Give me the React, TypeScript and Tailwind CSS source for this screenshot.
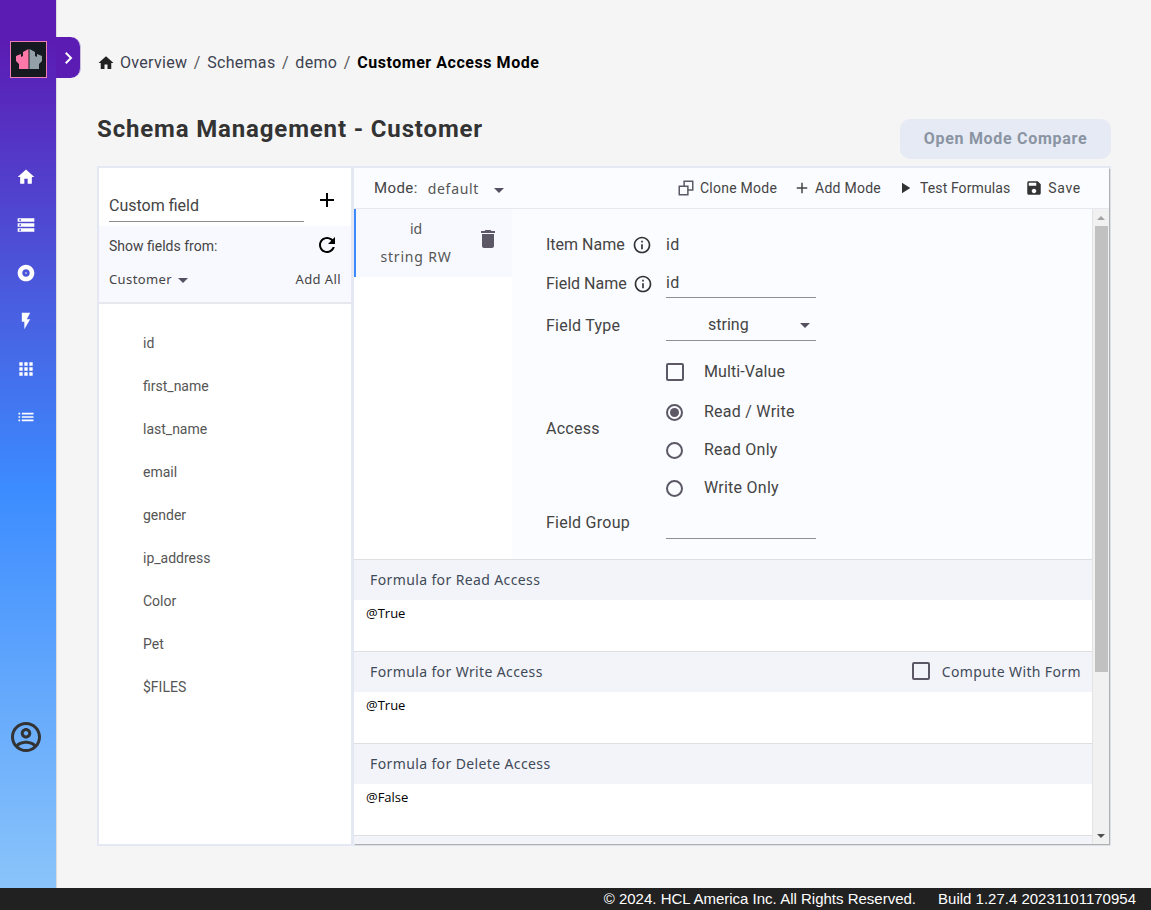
import type { ReactNode } from 'react';

const icons = {
    home: 'M10 20v-6h4v6h5v-8h3L12 3 2 12h3v8z',
    storage: 'M2 20h20v-4H2v4zm2-3h2v2H4v-2zM2 4v4h20V4H2zm4 3H4V5h2v2zm-4 7h20v-4H2v4zm2-3h2v2H4v-2z',
    album: 'M12 2C6.48 2 2 6.48 2 12s4.48 10 10 10 10-4.48 10-10S17.52 2 12 2zm0 14.5c-2.49 0-4.5-2.01-4.5-4.5S9.51 7.5 12 7.5s4.5 2.01 4.5 4.5-2.01 4.5-4.5 4.5zm0-5.5c-.55 0-1 .45-1 1s.45 1 1 1 1-.45 1-1-.45-1-1-1z',
    flash: 'M7 2v11h3v9l7-12h-4l4-8z',
    apps: 'M4 8h4V4H4v4zm6 12h4v-4h-4v4zm-6 0h4v-4H4v4zm0-6h4v-4H4v4zm6 0h4v-4h-4v4zm6-10v4h4V4h-4zm-6 4h4V4h-4v4zm6 6h4v-4h-4v4zm0 6h4v-4h-4v4z',
    list: 'M3 13h2v-2H3v2zm0 4h2v-2H3v2zm0-8h2V7H3v2zm4 4h14v-2H7v2zm0 4h14v-2H7v2zM7 7v2h14V7H7z',
    refresh: 'M17.65 6.35C16.2 4.9 14.21 4 12 4c-4.42 0-7.99 3.58-7.99 8s3.57 8 7.99 8c3.73 0 6.84-2.55 7.73-6h-2.08c-.82 2.33-3.04 4-5.65 4-3.31 0-6-2.69-6-6s2.69-6 6-6c1.66 0 3.14.69 4.22 1.78L13 11h7V4l-2.35 2.35z',
    trash: 'M6 19c0 1.1.9 2 2 2h8c1.1 0 2-.9 2-2V7H6v12zM19 4h-3.5l-1-1h-5l-1 1H5v2h14V4z',
    save: 'M17 3H5c-1.11 0-2 .9-2 2v14c0 1.1.89 2 2 2h14c1.1 0 2-.9 2-2V7l-4-4zm-5 16c-1.66 0-3-1.34-3-3s1.34-3 3-3 3 1.34 3 3-1.34 3-3 3zm3-10H5V5h10v4z',
    info: 'M11 7h2v2h-2zm0 4h2v6h-2zm1-9C6.48 2 2 6.48 2 12s4.48 10 10 10 10-4.48 10-10S17.52 2 12 2zm0 18c-4.41 0-8-3.59-8-8s3.59-8 8-8 8 3.59 8 8-3.59 8-8 8z',
    account: 'M12 2C6.48 2 2 6.48 2 12s4.48 10 10 10 10-4.48 10-10S17.52 2 12 2zM7.07 18.28c.43-.9 3.05-1.78 4.93-1.78s4.51.88 4.93 1.78C15.57 19.36 13.86 20 12 20s-3.57-.64-4.93-1.72zm11.29-1.45c-1.43-1.74-4.9-2.33-6.36-2.33s-4.93.59-6.36 2.33C4.62 15.49 4 13.82 4 12c0-4.41 3.59-8 8-8s8 3.59 8 8c0 1.82-.62 3.49-1.64 4.83zM12 6c-1.94 0-3.5 1.56-3.5 3.5S10.06 13 12 13s3.5-1.56 3.5-3.5S13.94 6 12 6zm0 5c-.83 0-1.5-.67-1.5-1.5S11.17 8 12 8s1.5.67 1.5 1.5S12.83 11 12 11z',
    plus: 'M19 13h-6v6h-2v-6H5v-2h6V5h2v6h6v2z',
    play: 'M8 5v14l11-7z',
    clone: 'M3 9.5h11.5v11.5H3zM9.5 9.5V3H21v11.5h-6.5',
};

function Icon({ name, className }: { name: keyof typeof icons; className: string }) {
    if (name === 'clone') {
        return (
            <svg viewBox="0 0 24 24" className={className} fill="none" stroke="currentColor" strokeWidth="2">
                <path d={icons.clone} />
            </svg>
        );
    }
    return (
        <svg viewBox="0 0 24 24" className={className} fill="currentColor">
            <path d={icons[name]} />
        </svg>
    );
}

function Caret() {
    return <span className="inline-block w-0 h-0 border-x-[5px] border-x-transparent border-t-[5px] border-t-[#55505f]" />;
}

function Logo() {
    return (
        <div className="size-[37px] border border-[#f07fb0] bg-[#141a20] flex items-center justify-center">
            <svg viewBox="1 1 35 35" className="size-[35px]">
                <path d="M6 15l5-2v3l2-1v-4l5.500-3v20H9v-5l-3-3z" fill="#ff78a8" />
                <path d="M19.500 8l5.500 3v4l2 1v-3l5 2v5l-3 3v5h-9.500z" fill="#94a0a8" />
            </svg>
        </div>
    );
}

function Sep() {
    return <span className="mx-[6.5px] text-[#555]">/</span>;
}

function Breadcrumb() {
    return (
        <div className="flex items-center h-5 text-[16px] tracking-[0.3px] text-[#3c4250] font-['Roboto',sans-serif]">
            <Icon name="home" className="size-[18px] text-[#222] mr-[5px]" />
            <span>Overview</span>
            <Sep />
            <span>Schemas</span>
            <Sep />
            <span>demo</span>
            <Sep />
            <span className="font-bold text-black tracking-[0.55px]">Customer Access Mode</span>
        </div>
    );
}

function ToolbarItem({ icon, iconClass, label, labelClass }: { icon: keyof typeof icons; iconClass: string; label: string; labelClass?: string }) {
    return (
        <div className="flex items-center">
            <Icon name={icon} className={iconClass} />
            <span className={labelClass}>{label}</span>
        </div>
    );
}

function Underlined({ children, className }: { children?: ReactNode; className: string }) {
    return <div className={`w-[150px] border-b border-[#8f8f8f] flex items-center ${className}`}>{children}</div>;
}

function Radio({ checked, label }: { checked?: boolean; label: string }) {
    return (
        <div className="h-[38px] flex items-center">
            <span className="size-[17px] rounded-full border-2 border-[#5c5866] flex items-center justify-center mr-[21px]">
                {checked && <span className="size-[9px] rounded-full bg-[#5c5866]" />}
            </span>
            <span>{label}</span>
        </div>
    );
}

function FormulaBlock({ title, value, right }: { title: string; value: string; right?: ReactNode }) {
    return (
        <div className="border-t border-[#dedfe3]">
            <div className="h-10 bg-[#f3f4f9] pl-4 pr-[11px] pb-0.5 flex items-center justify-between text-[14px] tracking-[0.38px] text-[#3f4a58] font-['Noto_Sans',sans-serif]">
                <span>{title}</span>
                {right}
            </div>
            <div className="h-[51px] bg-white pl-3 pt-[5px] text-[13px] leading-[16px] text-black font-['Open_Sans',sans-serif]">{value}</div>
        </div>
    );
}

const navIcons: (keyof typeof icons)[] = ['home', 'storage', 'album', 'flash', 'apps', 'list'];
const fields = ['id', 'first_name', 'last_name', 'email', 'gender', 'ip_address', 'Color', 'Pet', '$FILES'];

export default function App() {
    return (
        <div className="h-[910px] w-[1151px] flex flex-col overflow-hidden bg-[#f5f5f5] font-['Roboto',sans-serif]">
            <div className="flex flex-1 min-h-0">
                <aside className="relative w-[57px] shrink-0 border-r border-[#dcdcdc] bg-[linear-gradient(180deg,#5b1cb4_5%,#3c8cff_55%,#8ac4fa_100%)] flex flex-col items-center">
                    <div className="mt-[41px] self-start ml-2.5">
                        <Logo />
                    </div>
                    <div className="absolute left-[56px] top-[37px] w-[25px] h-[41px] bg-[#5b1cb4] rounded-r-[10px] border-r border-[#cbbfe0] flex items-center justify-center">
                        <svg viewBox="0 0 24 24" className="size-[18px] text-white" fill="none" stroke="currentColor" strokeWidth="2.6">
                            <path d="M9 5l7 7-7 7" />
                        </svg>
                    </div>
                    <nav className="mt-[89px] flex flex-col gap-[28px] text-white -ml-1">
                        {navIcons.map((n) => (
                            <Icon key={n} name={n} className="size-5" />
                        ))}
                    </nav>
                    <div className="mt-auto mb-[133px] -ml-1">
                        <Icon name="account" className="size-9 text-[#333]" />
                    </div>
                </aside>

                <main className="flex-1 min-w-0 pl-10 pr-10 pt-[53px] flex flex-col">
                    <Breadcrumb />
                    <div className="mt-[46px] flex items-start justify-between h-[47px]">
                        <h1 className="text-[24px] leading-[40px] mt-[-10px] font-bold tracking-[0.85px] text-[#333]">Schema Management - Customer</h1>
                        <button className="w-[211px] h-10 rounded-[10px] bg-[#e6eaf4] text-[16px] font-bold tracking-[0.7px] text-[#8a94a3]">Open Mode Compare</button>
                    </div>

                    <section className="h-[680px] border-2 border-[#e4e8f2] flex bg-[#e4e8f2]">
                        <div className="w-[252px] shrink-0 bg-white flex flex-col">
                            <div className="h-[58px] px-2.5 pt-[26px] flex items-start justify-between">
                                <div className="w-[195px] h-[28px] border-b border-[#8f8f8f] text-[16px] leading-[24px] text-[#444]">Custom field</div>
                                <Icon name="plus" className="size-6 text-black -mt-[6px] mr-[2px]" />
                            </div>
                            <div className="h-[76px] bg-[#f8f9fe] pl-2.5 pr-2.5 border-b-2 border-[#e6e8f0] box-content text-[#444]">
                                <div className="flex items-center justify-between h-10 text-[14px]">
                                    <span>Show fields from:</span>
                                    <Icon name="refresh" className="size-6 text-black mr-[2px] -mt-0.5" />
                                </div>
                                <div className="flex items-center justify-between h-[28px] text-[13px] tracking-[0.4px] font-['Noto_Sans',sans-serif]">
                                    <span className="flex items-center gap-1.5">Customer <Caret /></span>
                                    <span>Add All</span>
                                </div>
                            </div>
                            <ul className="pl-11 pt-[18px] text-[14px] text-[#555]">
                                {fields.map((f) => (
                                    <li key={f} className="h-[43px] leading-[43px]">{f}</li>
                                ))}
                            </ul>
                        </div>

                        <div className="ml-[3px] flex-1 min-w-0 flex flex-col bg-white shadow-[1px_1px_1px_#b0b0b0]">
                            <div className="h-[41px] shrink-0 border-b border-[#e6e8f0] bg-[#fbfcff] pl-5 pr-7 flex items-center justify-between text-[14px] tracking-[0.25px] text-[#444]">
                                <div className="flex items-center">
                                    <span className="text-[15px] tracking-[0.4px]">Mode:</span>
                                    <span className="ml-2.5 tracking-[0.7px] text-[#555] font-['Noto_Sans',sans-serif] text-[14px]">default</span>
                                    <span className="ml-[15px]"><Caret /></span>
                                </div>
                                <div className="flex items-center">
                                    <ToolbarItem icon="clone" iconClass="size-[18px] mr-[5px] text-[#5c5866]" label="Clone Mode" />
                                    <span className="ml-4"><ToolbarItem icon="plus" iconClass="size-[18px] mr-1 text-[#444]" label="Add Mode" /></span>
                                    <span className="ml-[15px]"><ToolbarItem icon="play" iconClass="size-[18px] mr-1.5 text-[#333]" label="Test Formulas" labelClass="tracking-[0.1px]" /></span>
                                    <span className="ml-[15px]"><ToolbarItem icon="save" iconClass="size-[18px] mr-[5px] text-[#333]" label="Save" labelClass="tracking-[0.7px]" /></span>
                                </div>
                            </div>

                            <div className="flex-1 min-h-0 flex">
                                <div className="flex-1 min-w-0 overflow-hidden">
                                    <div className="h-[350px] flex">
                                        <div className="w-[158px] shrink-0 bg-white">
                                            <div className="h-[68px] bg-[#f8f9fe] border-l-2 border-[#3b8bff] relative flex flex-col items-center pr-[36px] text-[14px] text-[#555] font-['Noto_Sans',sans-serif]">
                                                <span className="mt-2.5 leading-[20px]">id</span>
                                                <span className="mt-2 leading-[20px] tracking-[0.8px]">string RW</span>
                                                <Icon name="trash" className="absolute right-[12px] top-[18px] size-6 text-[#5c5866]" />
                                            </div>
                                        </div>
                                        <div className="flex-1 bg-[#fbfcff] pl-[34px] text-[16px] tracking-[0.25px] text-[#444]">
                                            <div className="h-[38px] mt-[17px] flex items-center">
                                                <span className="w-[120px] flex items-center tracking-normal">Item Name<Icon name="info" className="size-5 ml-[7px] text-[#333]" /></span>
                                                <span>id</span>
                                            </div>
                                            <div className="h-[38px] mt-px flex items-center">
                                                <span className="w-[120px] flex items-center tracking-normal">Field Name<Icon name="info" className="size-5 ml-[6px] text-[#333]" /></span>
                                                <Underlined className="h-[31px] mt-[-3px] pt-[2px]">id</Underlined>
                                            </div>
                                            <div className="h-[44px] flex items-center">
                                                <span className="w-[120px] mt-px">Field Type</span>
                                                <Underlined className="h-[32px] mt-[-1px] pt-[2px] justify-between pl-[42px] pr-[6px] tracking-normal">
                                                    <span>string</span>
                                                    <Caret />
                                                </Underlined>
                                            </div>
                                            <div className="flex mt-[6px]">
                                                <span className="w-[120px] self-center mt-[-2px]">Access</span>
                                                <div>
                                                    <div className="h-[38px] flex items-center">
                                                        <span className="size-[18px] rounded-[2px] border-2 border-[#5c5866] mr-5" />
                                                        <span className="tracking-[0.1px]">Multi-Value</span>
                                                    </div>
                                                    <div className="h-0.5" />
                                                    <Radio checked label="Read / Write" />
                                                    <Radio label="Read Only" />
                                                    <Radio label="Write Only" />
                                                </div>
                                            </div>
                                            <div className="flex items-end">
                                                <span className="w-[120px] leading-[24px] mb-[4px]">Field Group</span>
                                                <Underlined className="h-[32px]" />
                                            </div>
                                        </div>
                                    </div>
                                    <FormulaBlock title="Formula for Read Access" value="@True" />
                                    <FormulaBlock
                                        title="Formula for Write Access"
                                        value="@True"
                                        right={
                                            <span className="flex items-center">
                                                <span className="size-[18px] rounded-[2px] border-2 border-[#5c5866] mr-[12px]" />
                                                Compute With Form
                                            </span>
                                        }
                                    />
                                    <FormulaBlock title="Formula for Delete Access" value="@False" />
                                    <div className="border-t border-[#dedfe3] h-10 bg-[#f3f4f9]" />
                                </div>
                                <div className="w-[17px] shrink-0 border-l border-[#e4e4e4] bg-[#f1f1f1] flex flex-col items-center">
                                    <div className="h-[17px] flex items-center justify-center">
                                        <span className="w-0 h-0 border-x-[4px] border-x-transparent border-b-[4px] border-b-[#a3a3a3]" />
                                    </div>
                                    <div className="w-[13px] h-[446px] bg-[#c1c1c1]" />
                                    <div className="mt-auto h-[17px] flex items-center justify-center">
                                        <span className="w-0 h-0 border-x-[4px] border-x-transparent border-t-[4px] border-t-[#505050]" />
                                    </div>
                                </div>
                            </div>
                        </div>
                    </section>
                </main>
            </div>
            <footer className="h-[22px] shrink-0 bg-[#212121] pr-[15px] flex items-center justify-end text-[15px] text-white font-['Liberation_Sans',sans-serif]">
                <span>© 2024. HCL America Inc. All Rights Reserved.</span>
                <span className="ml-[22px]">Build 1.27.4 20231101170954</span>
            </footer>
        </div>
    );
}
